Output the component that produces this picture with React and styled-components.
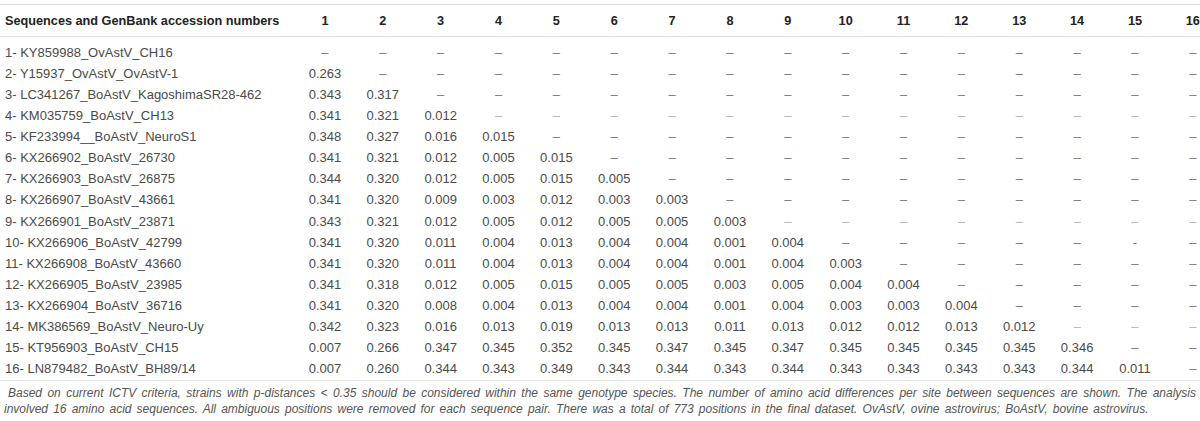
import React from "react";
import styled, { createGlobalStyle } from "styled-components";

const Global = createGlobalStyle`
  html, body { margin: 0; padding: 0; background: #fff; }
  body { font-family: "Liberation Sans", Arial, sans-serif; overflow: hidden; }
`;

const Wrap = styled.div`
  width: 1200px;
  overflow: hidden;
  padding-top: 4px;
`;

const Table = styled.div`
  border-top: 1px solid #dcdcdc;
`;

const COLS = "296px repeat(16, 57.87px)";

const HeadRow = styled.div`
  display: grid;
  grid-template-columns: ${COLS};
  height: 31px;
  align-items: center;
  border-bottom: 1px solid #dcdcdc;
`;

const HeadCell = styled.div`
  font-weight: bold;
  font-size: 12.7px;
  color: #222;
  text-align: ${(p) => (p.$label ? "left" : "center")};
  padding-left: ${(p) => (p.$label ? "5px" : "0")};
  white-space: nowrap;
`;

const Body = styled.div`
  padding: 5px 0 1px;
  border-bottom: 1px solid #e4e4e4;
`;

const Row = styled.div`
  display: grid;
  grid-template-columns: ${COLS};
  height: 21.07px;
  align-items: center;
`;

const Cell = styled.div`
  font-size: 13px;
  color: ${(p) => (p.$dash ? (p.$faint ? "#b5b5b5" : "#7a7a7a") : "#4a4a4a")};
  text-align: ${(p) => (p.$label ? "left" : "center")};
  padding-left: ${(p) => (p.$label ? "5px" : "0")};
  white-space: nowrap;
`;

const Note = styled.p`
  margin: 0;
  padding: 5px 4px 0 4px;
  text-indent: 4px;
  text-align: justify;
  word-spacing: 1.8px;
  font-style: italic;
  font-size: 12px;
  line-height: 15.5px;
  color: #555;
`;

const labels = [
  "1- KY859988_OvAstV_CH16",
  "2- Y15937_OvAstV_OvAstV-1",
  "3- LC341267_BoAstV_KagoshimaSR28-462",
  "4- KM035759_BoAstV_CH13",
  "5- KF233994__BoAstV_NeuroS1",
  "6- KX266902_BoAstV_26730",
  "7- KX266903_BoAstV_26875",
  "8- KX266907_BoAstV_43661",
  "9- KX266901_BoAstV_23871",
  "10- KX266906_BoAstV_42799",
  "11- KX266908_BoAstV_43660",
  "12- KX266905_BoAstV_23985",
  "13- KX266904_BoAstV_36716",
  "14- MK386569_BoAstV_Neuro-Uy",
  "15- KT956903_BoAstV_CH15",
  "16- LN879482_BoAstV_BH89/14",
];

const values = [
  [],
  ["0.263"],
  ["0.343", "0.317"],
  ["0.341", "0.321", "0.012"],
  ["0.348", "0.327", "0.016", "0.015"],
  ["0.341", "0.321", "0.012", "0.005", "0.015"],
  ["0.344", "0.320", "0.012", "0.005", "0.015", "0.005"],
  ["0.341", "0.320", "0.009", "0.003", "0.012", "0.003", "0.003"],
  ["0.343", "0.321", "0.012", "0.005", "0.012", "0.005", "0.005", "0.003"],
  ["0.341", "0.320", "0.011", "0.004", "0.013", "0.004", "0.004", "0.001", "0.004"],
  ["0.341", "0.320", "0.011", "0.004", "0.013", "0.004", "0.004", "0.001", "0.004", "0.003"],
  ["0.341", "0.318", "0.012", "0.005", "0.015", "0.005", "0.005", "0.003", "0.005", "0.004", "0.004"],
  ["0.341", "0.320", "0.008", "0.004", "0.013", "0.004", "0.004", "0.001", "0.004", "0.003", "0.003", "0.004"],
  ["0.342", "0.323", "0.016", "0.013", "0.019", "0.013", "0.013", "0.011", "0.013", "0.012", "0.012", "0.013", "0.012"],
  ["0.007", "0.266", "0.347", "0.345", "0.352", "0.345", "0.347", "0.345", "0.347", "0.345", "0.345", "0.345", "0.345", "0.346"],
  ["0.007", "0.260", "0.344", "0.343", "0.349", "0.343", "0.344", "0.343", "0.344", "0.343", "0.343", "0.343", "0.343", "0.344", "0.011"],
];

const faintRows = new Set([3, 8, 13]);

export default function App() {
  const cols = Array.from({ length: 16 }, (_, i) => i + 1);
  return (
    <Wrap>
      <Global />
      <Table>
        <HeadRow>
          <HeadCell $label>Sequences and GenBank accession numbers</HeadCell>
          {cols.map((c) => (
            <HeadCell key={c}>{c}</HeadCell>
          ))}
        </HeadRow>
        <Body>
          {labels.map((label, r) => (
            <Row key={label}>
              <Cell $label>{label}</Cell>
              {cols.map((c, i) => {
                const v = values[r][i];
                if (v) return <Cell key={c}>{v}</Cell>;
                const hyphen = r === 9 && c === 15;
                return (
                  <Cell key={c} $dash $faint={faintRows.has(r)}>
                    {hyphen ? "-" : "–"}
                  </Cell>
                );
              })}
            </Row>
          ))}
        </Body>
      </Table>
      <Note>
        Based on current ICTV criteria, strains with p-distances &lt; 0.35 should be considered within the same genotype species. The number of amino acid differences per site between sequences are shown. The analysis involved 16 amino acid sequences. All ambiguous positions were removed for each sequence pair. There was a total of 773 positions in the final dataset. OvAstV, ovine astrovirus; BoAstV, bovine astrovirus.
      </Note>
    </Wrap>
  );
}
